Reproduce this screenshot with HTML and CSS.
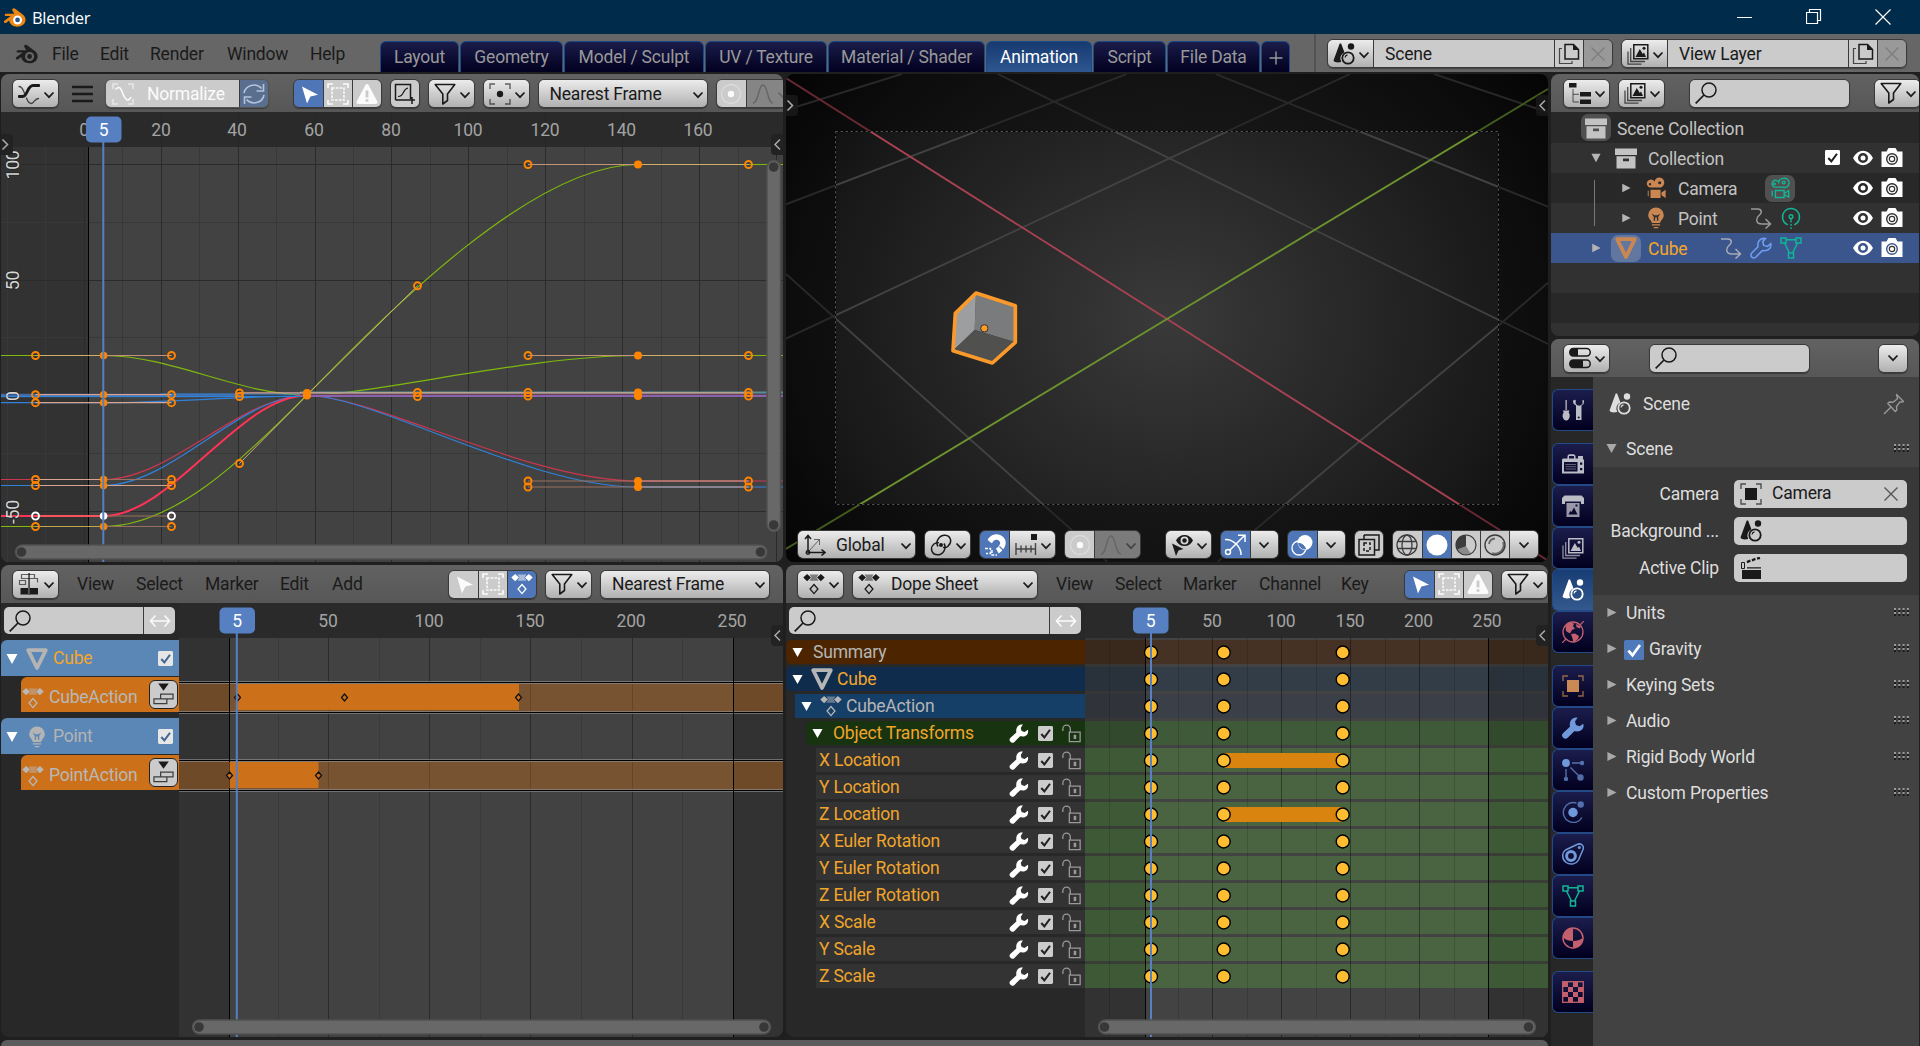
FILE: index.html
```html
<!DOCTYPE html>
<html lang="en">
<head>
<meta charset="utf-8">
<title>Blender</title>
<link rel="stylesheet" href="styles.css">
</head>
<body>
<svg class="defs" aria-hidden="true">
  <defs>
    <symbol id="logo" viewBox="0 0 24 20"><path fill="currentColor" d="M10.2.7c.8-.6 1.700-.4 2.500.2l7.600 5.800c2.400 1.800 3.500 3.900 3.300 6.300-.3 3.900-3.900 6.700-8.600 6.700-4.600 0-8.100-2.700-8.600-6.500L3.400 15.500c-.9.600-1.900.4-2.300-.2-.5-.7-.3-1.500.5-2.100L8 8.500H3.200C2.300 8.500 1.700 8 1.700 7.300S2.300 6 3.200 6h8.600L9.900 2.900C9.400 2.100 9.500 1.200 10.200.7z"/><circle class="logo-ring" cx="15.200" cy="12.600" r="4.700"/><circle class="logo-eye" cx="15.200" cy="12.600" r="2.500"/></symbol>
    <symbol id="chev" viewBox="0 0 12 8"><path d="M1.500 1.500 6 6.200l4.500-4.700" fill="none" stroke="currentColor" stroke-width="1.700"/></symbol>
    <symbol id="tri-d" viewBox="0 0 12 12"><path d="M.5 1h11L6 11z" fill="currentColor"/></symbol>
    <symbol id="tri-r" viewBox="0 0 12 12"><path d="M1.500 1 11.500 6l-10 5z" fill="currentColor"/></symbol>
    <symbol id="curve" viewBox="0 0 22 22"><g fill="none" stroke="currentColor" stroke-linecap="round"><path d="M1 13.500h3.500C10 13.500 9 2.500 15 2.500h6" stroke-width="2.800"/><path d="M1 3.500c4 0 4 5 6 7M8.500 15c1 3 2.500 5.500 5 5.500s3-5 7-5" stroke-width="1.300" opacity=".75"/></g></symbol>
    <symbol id="norm" viewBox="0 0 22 22"><g fill="none" stroke="currentColor" stroke-width="1.500"><path d="M1 6V1h5M16 1h5v5M21 16v5h-5M6 21H1v-5" opacity=".6"/><path d="M3.500 6.500C8 2 9 6 11 11s5 9 8 3"/></g></symbol>
    <symbol id="sync" viewBox="0 0 22 22"><g fill="none" stroke="currentColor" stroke-width="1.600"><path d="M1 10A10 9.500 0 0 1 18.500 5.500M20.500 1v7h-7M21 12A10 9.500 0 0 1 3.500 16.500M1.500 21v-7h7"/></g></symbol>
    <symbol id="cursor" viewBox="0 0 22 22"><path d="M4 3.500 20 11.800l-7.600 1.700L9 20.500z" fill="currentColor"/></symbol>
    <symbol id="boxsel" viewBox="0 0 22 22"><g fill="none" stroke="currentColor" stroke-width="1.600"><path d="M1 5V1h5M16 1h5v4M21 17v4h-5M6 21H1v-4"/><path d="M5 5h12v12H5z" stroke-dasharray="2.600 1.200"/></g></symbol>
    <symbol id="warn" viewBox="0 0 22 22"><path fill="currentColor" fill-rule="evenodd" d="M9.400 2c.6-1.200 2.600-1.200 3.200 0l8.700 16.500c.6 1.200-.1 2.500-1.500 2.500H2.200C.8 21 .1 19.700.7 18.500zM9.600 7.500v7h2.800v-7zm0 8.800v2.400h2.800v-2.400z"/></symbol>
    <symbol id="gbox" viewBox="0 0 22 22"><g fill="none" stroke="currentColor" stroke-width="1.500"><path d="M1.500 17V1.500h15V16M1.500 17H21M18 14v7"/><path d="M4 13.500C11 13 8 6 14 5" stroke-width="1.200"/></g></symbol>
    <symbol id="filter" viewBox="0 0 22 22"><path d="M1.200 1.500h19.600L13.500 11v6.500L8.800 21V11z" fill="none" stroke="currentColor" stroke-width="1.600" stroke-linejoin="round"/></symbol>
    <symbol id="pivot" viewBox="0 0 22 22"><path d="M1 6V1h5M16 1h5v5M21 16v5h-5M6 21H1v-5" fill="none" stroke="currentColor" stroke-width="1.400" opacity=".65"/><circle cx="11" cy="11" r="3.200" fill="currentColor"/></symbol>
    <symbol id="prop" viewBox="0 0 22 22"><circle cx="11" cy="11" r="9.500" fill="none" stroke="currentColor" opacity=".35" stroke-width="1.300"/><circle cx="11" cy="11" r="3.200" fill="currentColor"/></symbol>
    <symbol id="falloff" viewBox="0 0 22 22"><path d="M1 20c6 0 5-18 10-18s4 18 10 18" fill="none" stroke="currentColor" stroke-width="1.500"/></symbol>
    <symbol id="scene" viewBox="0 0 22 22"><path fill="currentColor" d="M6.700.6h1.400l3.300 8.600a7 7 0 0 0-3.200 9.800C5 19.900 1.600 19.600.5 17.500z"/><circle cx="18" cy="3.500" r="3.200" fill="currentColor"/><circle cx="15" cy="15" r="5.700" fill="none" stroke="currentColor" stroke-width="1.800"/><path d="M12 14.500a3.200 3.200 0 0 1 2.500-2.700" stroke="currentColor" fill="none" stroke-width="1.200"/></symbol>
    <symbol id="copy" viewBox="0 0 22 22"><path d="M7 1.500h8.500l5 5V16H7z" fill="none" stroke="currentColor" stroke-width="1.500"/><path d="M15 1v6h6z" fill="currentColor"/><path d="M4 5.500H1.500v15H14V18" fill="none" stroke="currentColor" stroke-width="1.200" opacity=".75"/></symbol>
    <symbol id="x" viewBox="0 0 22 22"><path d="m4.500 4.500 13 13m0-13-13 13" stroke="currentColor" stroke-width="1.400" fill="none"/></symbol>
    <symbol id="layers" viewBox="0 0 22 22"><path d="M6.800 1.700h14v14h-14z" fill="none" stroke="currentColor" stroke-width="1.500"/><path d="m8.500 14 4.300-8 3 5 1.200-1.500 2 4.500z" fill="currentColor"/><circle cx="17" cy="5.200" r="1.500" fill="currentColor"/><path d="M3.700 5v13.500H18M1 8.500v12.700h13.500" fill="none" stroke="currentColor" stroke-width="1.300" opacity=".75"/></symbol>
    <symbol id="tree" viewBox="0 0 22 22"><path fill="currentColor" d="M0 1h7.500v4.500H0zM11 10h11v4.500H11zM11 17.500h11V22H11z"/><path d="M4 7v13h6M4 12.300h6" fill="none" stroke="currentColor" opacity=".7"/></symbol>
    <symbol id="search" viewBox="0 0 22 22"><circle cx="14" cy="8" r="7" fill="none" stroke="currentColor" stroke-width="1.500"/><path d="m9 13-8.300 8.300" stroke="currentColor" stroke-width="1.700"/></symbol>
    <symbol id="coll" viewBox="0 0 22 22"><path fill="currentColor" fill-rule="evenodd" d="M0 1.500h22V8H0zM1.500 9.200h19V21.500h-19zM8 11.500v2.800h6v-2.800z"/></symbol>
    <symbol id="eye" viewBox="0 0 22 22"><path fill="currentColor" fill-rule="evenodd" d="M1 11Q5 3.700 11 3.700T21 11q-4 7.300-10 7.300T1 11zm10-5a5 5 0 1 0 0 10 5 5 0 0 0 0-10z"/><circle cx="11" cy="11" r="2.500" fill="currentColor"/></symbol>
    <symbol id="cam" viewBox="0 0 22 22"><path fill="currentColor" fill-rule="evenodd" d="M.5 4.500h5L7.500 1h7l2 3.500h5V20H.5zM11 6a6 6 0 1 0 0 12 6 6 0 0 0 0-12z"/><circle cx="11" cy="12" r="4.600" fill="currentColor"/><circle cx="11" cy="12" r="2.700" fill="none" stroke="#333" stroke-width="1.200"/></symbol>
    <symbol id="check" viewBox="0 0 16 16"><rect width="16" height="16" rx="1.500" fill="currentColor"/><path d="m3.500 8.500 3.300 3.700L12.800 4" class="tick"/></symbol>
    <symbol id="movie" viewBox="0 0 22 24"><path fill="currentColor" fill-rule="evenodd" d="M15 .5a5.500 5.500 0 1 1-1 11H4.500a4.500 4.500 0 1 1 5-6.500A5.500 5.500 0 0 1 15 .5zm0 4a1.700 1.700 0 1 0 0 3.400 1.700 1.700 0 0 0 0-3.400zM4.500 6.500a1.300 1.300 0 1 0 0 2.600 1.300 1.300 0 0 0 0-2.600zM5 14h11v9H5zM3 15v6H2v-6zM21.500 14v9L17 20v-3z"/></symbol>
    <symbol id="movie-o" viewBox="0 0 22 24"><g fill="none" stroke="currentColor" stroke-width="1.500"><path d="M15 1.500a5 5 0 1 1-1 9.500H5a3.800 3.800 0 1 1 4.600-5.200A5.200 5.200 0 0 1 15 1.500zM6 14.700h9.500v7.600H6zM20.500 15v7L16 19.500v-2zM2.500 15v6"/><circle cx="15" cy="6" r="1.500"/><circle cx="5" cy="7.500" r=".8"/></g></symbol>
    <symbol id="bulb" viewBox="0 0 22 24"><path fill="currentColor" fill-rule="evenodd" d="M11 .5a8.500 8.500 0 0 1 8.500 8.500c0 4-3.500 5-4 8.500h-9c-.5-3.500-4-4.500-4-8.500A8.500 8.500 0 0 1 11 .5zM7 7v1.500l1.500 2.200V15H10v-3.500h2V15h1.500v-4.300L15 8.500V7l-2 2H9z"/><path d="M6.500 19.500h9M8.500 22.500h5" stroke="currentColor" stroke-width="1.600"/></symbol>
    <symbol id="anim" viewBox="0 0 22 22"><path d="M1 2h6.500c5 0 4.500 4 1.500 6.500s-4 8.500 3 8.500h8.500M15.500 12l5 5-5 4.500" fill="none" stroke="currentColor" stroke-width="1.500"/></symbol>
    <symbol id="light" viewBox="0 0 22 24"><path d="M7.500 19.500A9.300 9.300 0 1 1 14.500 19.500M11 12v5M11 18.500v2M11 22v2" fill="none" stroke="currentColor" stroke-width="1.500"/><circle cx="11" cy="10.500" r="2" fill="none" stroke="currentColor" stroke-width="1.500"/></symbol>
    <symbol id="obmesh" viewBox="0 0 22 22"><path d="M2.200 2.200h17.600L11 20z" fill="none" stroke="currentColor" stroke-width="3.800" stroke-linejoin="round"/></symbol>
    <symbol id="wrench" viewBox="0 0 22 22"><path fill="currentColor" d="M15.500.7 13 4.500l1 3.600 3.500 1.200 3.800-2.600c1 3.500-.8 7.700-5.800 7.700-1.500 0-2.500-.3-3.200-.2l-6.600 6.500A3.100 3.100 0 0 1 1.200 16l6.700-6.300C7 3.500 11-.3 15.500.7z"/></symbol>
    <symbol id="wrench-o" viewBox="0 0 22 22"><path fill="none" stroke="currentColor" stroke-width="1.600" d="M15.500 1.500 12.700 4.700l1 3.700 3.800 1 3.200-2.600c.8 3.500-1.200 6.900-6 6.900-1 0-1.800-.3-2.500 0L6 20a2.900 2.900 0 0 1-4.300-4L8 9.800C7 4.500 10.500.6 15.500 1.500z"/></symbol>
    <symbol id="mesh" viewBox="0 0 22 22"><g fill="none" stroke="currentColor" stroke-width="1.500"><path d="M1 1h5v5H1zM16 1h5v5h-5zM8.500 16h5v5h-5zM6 2.700h10M4.500 6l5 10M17.500 6l-5 10"/></g></symbol>
    <symbol id="props" viewBox="0 0 22 22"><g fill="none" stroke="currentColor" stroke-width="1.500"><rect x=".8" y="1.500" width="20.400" height="7.600" rx="3.500"/><rect x=".8" y="13" width="20.400" height="7.600" rx="3.500"/></g><path d="M4 1.500h5v7.600H4a3 3 0 0 1-3-3v-1.600a3 3 0 0 1 3-3zM4 13h10v7.600H4a3 3 0 0 1-3-3V16a3 3 0 0 1 3-3z" fill="currentColor"/></symbol>
    <symbol id="tool" viewBox="0 0 22 22"><path fill="currentColor" d="M3.500 1h1.300v10H3.500zM.8 11.500h6.700l-.8 2c2.300 3 .5 8-2.500 8s-5-5-2.500-8zM11 1.500c0 3 .7 3.700 3 5V21h5.500V6.500c2.300-1.300 2.500-2 2.500-5l-1.500-.7v4l-2 1.700h-2.800l-2-1.700v-4z"/><circle cx="16.700" cy="18.500" r="1" fill="#0a0b33"/></symbol>
    <symbol id="render" viewBox="0 0 22 22"><path fill="currentColor" fill-rule="evenodd" d="M1 5.500h4.500V2.700l1.500-1.500h5l1.500 1.500v2.800H16V3h5v3l1 1v13.500H0V6.500zM7 3v2.500h5V3zM2 9v9.500h13.500V9zM18 9.500v2.300h2.300V9.500zM18 15v2.300h2.300V15z"/><path d="M3.500 11.500H14M3.500 13.700H14M3.500 16H14" stroke="currentColor" stroke-width=".8" opacity=".6"/></symbol>
    <symbol id="output" viewBox="0 0 22 22"><path fill="currentColor" d="M2.500.5h17L22 3v6h-3V6.500H3V9H0V3z"/><path fill="currentColor" fill-rule="evenodd" opacity=".8" d="M4.500 8h13v14h-13zM6.500 19.500h9L12 12.500 9.500 17 8.200 16zM13.500 9.500v2h2v-2z"/></symbol>
    <symbol id="world" viewBox="0 0 22 22"><circle cx="11" cy="11" r="10" fill="none" stroke="currentColor" stroke-width="1.300"/><path fill="currentColor" d="M3.500 4.500 8 1.500l4 1-1 3 2 2-3 1.500-2 3.500-4-2.500zM14 3l5 2.500-1.500 2L14.500 6zM9 13l4-.5 4 2.500-1 3-4.500 3.500-1-4z"/><path d="m18 4 4-4M0 22l4-4" stroke="currentColor" stroke-width="1.200"/></symbol>
    <symbol id="object" viewBox="0 0 22 22"><path d="M1 6V1h5M16 1h5v5M21 16v5h-5M6 21H1v-5" fill="none" stroke="currentColor" stroke-width="1.400" opacity=".7"/><rect x="5" y="5" width="12" height="12" fill="currentColor"/></symbol>
    <symbol id="parts" viewBox="0 0 22 22"><circle cx="4" cy="4" r="3.900" fill="currentColor"/><g opacity=".7" fill="currentColor" stroke="currentColor" stroke-width="1.400"><path d="M10 4h9M4 10v9M8.500 8.500 18 18"/><circle cx="20" cy="4" r="1.500"/><circle cx="4" cy="20" r="1.500"/><circle cx="18.500" cy="18.500" r="2.500"/></g></symbol>
    <symbol id="physics" viewBox="0 0 22 22"><circle cx="11" cy="11.500" r="4.700" fill="currentColor"/><g opacity=".7"><path d="M14.500 2A10 10 0 1 0 20 16.500" fill="none" stroke="currentColor" stroke-width="1.400"/><circle cx="18.700" cy="3.500" r="3.200" fill="currentColor"/></g></symbol>
    <symbol id="constr" viewBox="0 0 22 22"><path d="M3.500 7 15 1.500c4-2 7.500 1.500 6 5L16.500 17c-2 4-8 5.500-12.300 2.500S-.500 10 3.500 7z" fill="none" stroke="currentColor" stroke-width="1.500"/><circle cx="9" cy="13" r="4.400" fill="none" stroke="currentColor" stroke-width="3"/><circle cx="17.300" cy="4.500" r="1.500" fill="currentColor"/></symbol>
    <symbol id="material" viewBox="0 0 22 22"><circle cx="11" cy="11" r="10" fill="none" stroke="currentColor" stroke-width="1.500"/><path fill="currentColor" d="M11 1v13C7 14 4 13 1.500 11A10 10 0 0 1 11 1zM11 14c4 0 7-1 9.800-3A10 10 0 0 1 11 21z"/></symbol>
    <symbol id="texture" viewBox="0 0 22 22"><rect x=".7" y=".7" width="20.600" height="20.600" fill="none" stroke="currentColor" stroke-width="1.300"/><path fill="currentColor" d="M1 1h5v5H1zM11 1h5v5h-5zM6 6h5v5H6zM16 6h5v5h-5zM1 11h5v5H1zM11 11h5v5h-5zM6 16h5v5H6zM16 16h5v5h-5z"/></symbol>
    <symbol id="pin" viewBox="0 0 22 22"><path d="m13.500 1.500 7 7-2 .7-1.500-.3-3.500 4.600.3 3.500-1.500 1.500L4.800 10.500l1.500-1.500 3.700.2 4.500-3.500-.3-1.700zM8 14l-7 7" fill="none" stroke="currentColor" stroke-width="1.400" stroke-linejoin="round"/></symbol>
    <symbol id="clip" viewBox="0 0 22 22"><path fill="currentColor" d="M2 13h19v9H2zM7 10.300h14v1.200H7zM6.500 4l3.500-1.500.8 2.300-3.500 1.500zM11.500 2.200 15 .8l.8 2.300-3.500 1.400zM16.700.5l3-.8.6 2.300-2.900.8z"/><path d="M1.500 5.500h3v6h-3z" fill="none" stroke="currentColor"/></symbol>
    <symbol id="nla" viewBox="0 0 22 22"><path fill="currentColor" d="M2.500 15H10v6.500H2.500zM12 15h8v6.500h-8zM10.400 0h1.300v22h-1.300z"/><path d="M3.500 1.500h13v4h-13zM1.500 7.500h6v4h-6zM9.500 5.500h10v4" fill="none" stroke="currentColor" stroke-width="1.200" opacity=".65"/></symbol>
    <symbol id="action" viewBox="0 0 24 22"><path fill="currentColor" d="m4.500 0 4.200 4-4.200 4-4.200-4zM19.500 0l4.200 4-4.200 4-4.200-4z"/><path fill="currentColor" opacity=".5" d="M7 .6h10L14.700 4 17 7.400H7L9.300 4z"/><path d="m12 11.500 4.300 5-4.300 5-4.300-5z" fill="none" stroke="currentColor" stroke-width="1.400"/></symbol>
    <symbol id="swap" viewBox="0 0 22 22"><path d="M1.500 11h19M6.500 5.500l-5 5.500 5 5.500M15.500 5.500l5 5.500-5 5.500" fill="none" stroke="currentColor" stroke-width="1.600"/></symbol>
    <symbol id="push" viewBox="0 0 22 24"><path d="M5.500.5h11L11 8z" fill="currentColor"/><path d="M8 11.500h13v5H8zM1 16.500h13.500v5H1z" fill="none" stroke="currentColor" stroke-width="1.300" opacity=".8"/></symbol>
    <symbol id="axes" viewBox="0 0 22 22"><path d="M4 1.500V18.500H21M1 5l3-3.500L7 5M17.500 15.500l3.500 3-3.500 3" fill="none" stroke="currentColor" stroke-width="1.500"/><circle cx="4" cy="18.500" r="1.800" fill="none" stroke="currentColor" stroke-width="1.300"/><path d="M5 17 15.500 5.500M10 5.500h5.500V11" fill="none" stroke="currentColor" opacity=".6"/></symbol>
    <symbol id="link" viewBox="0 0 22 22"><g fill="none" stroke="currentColor" stroke-width="1.500"><path d="M8 12.500C5 8 9 1 15 1.200c6 .3 7.500 7.300 3 11-1.500 1.300-3.500 1.600-5 1.200"/><path d="M14 9.500c3 5-1 11.300-6.500 11.300-6 0-8-7-3.500-10.800 1.500-1.300 3-1.600 4.800-1.200"/></g><circle cx="11" cy="11" r="2" fill="currentColor"/></symbol>
    <symbol id="magnet" viewBox="0 0 22 22"><path d="M5.500 8C8 2.500 14 1.500 17.300 5s1.200 9-4 12" fill="none" stroke="currentColor" stroke-width="5.500"/><path d="M15.500 12.500l4 4M3 6l4.500 4.500" stroke="#4f76b6" stroke-width="1.200"/><path d="M1 14.500h5.500v5H2M8 16v5h5" fill="none" stroke="currentColor" stroke-dasharray="3 1.300" stroke-width="1.400"/></symbol>
    <symbol id="snap" viewBox="0 0 22 22"><path fill="currentColor" d="M16 0h6v6h-6z"/><path d="M1 9v12M6 11.500v7M11 11.500v7M16 11.500v7M20.500 9v12M1 15h20" fill="none" stroke="currentColor" stroke-width="1.400" opacity=".75"/></symbol>
    <symbol id="vis" viewBox="0 0 22 22"><path fill="currentColor" fill-rule="evenodd" d="M5 6.500Q8 1 13.500 1T22 6.500Q19 12 13.500 12T5 6.500zm8.500-4a4 4 0 1 0 0 8 4 4 0 0 0 0-8z"/><circle cx="13.500" cy="6.500" r="2.200" fill="currentColor"/><path fill="currentColor" d="M1 9.500 12.500 15 7.500 16.500 5 22z"/></symbol>
    <symbol id="gizmo" viewBox="0 0 22 22"><g fill="none" stroke="currentColor" stroke-width="1.500"><path d="m5.500 16.500 15-15M14 1.200h7V8M1 5.500C9 5 17.500 13 17 21"/><circle cx="4" cy="18" r="2.500"/></g></symbol>
    <symbol id="overlay" viewBox="0 0 22 22"><circle cx="14" cy="8.500" r="7.500" fill="currentColor"/><circle cx="8" cy="14" r="7" fill="none" stroke="currentColor" stroke-width="1.300"/><path d="M7.500 9.500a6.800 6.800 0 0 1 7 5.500 6.800 6.800 0 0 1-7-5.500z" fill="#4e74b4" stroke="#4e74b4"/></symbol>
    <symbol id="xray" viewBox="0 0 22 22"><g fill="none" stroke="currentColor" stroke-width="1.500"><path d="M6 1h15v15H17M6 1v4M1 5.500h15.500V21H1z"/><path d="M6 9v8h6V9z" stroke-dasharray="3 2"/></g></symbol>
    <symbol id="wire" viewBox="0 0 22 22"><g fill="none" stroke="currentColor" stroke-width="1.300"><circle cx="11" cy="11" r="10"/><ellipse cx="11" cy="11" rx="5" ry="10"/><path d="M2 7.500h18M2 14.500h18"/></g></symbol>
    <symbol id="solid" viewBox="0 0 22 22"><circle cx="11" cy="11" r="10.500" fill="currentColor"/></symbol>
    <symbol id="matprev" viewBox="0 0 22 22"><circle cx="11" cy="11" r="10" fill="none" stroke="currentColor" stroke-width="1.200"/><path fill="currentColor" d="M11 1v11l5 8C8 23 1 18 1 11A10 10 0 0 1 11 1z" opacity=".45"/><path fill="currentColor" d="M11 1v11L2 15.500A10 10 0 0 1 11 1z"/></symbol>
    <symbol id="rend" viewBox="0 0 22 22"><circle cx="11" cy="11" r="10" fill="none" stroke="currentColor" stroke-width="1.400"/><path d="M5 10a6.500 6.500 0 0 1 6-5.500M19 8a8.500 8.500 0 0 1-11 11" fill="none" stroke="currentColor" stroke-width="1.800" opacity=".7"/></symbol>
    <symbol id="lock" viewBox="0 0 22 22"><path d="M1 8V5.500a4.300 4.300 0 0 1 8.600 0V9.500M8.500 9.500h12.500v11H8.500z" fill="none" stroke="currentColor" stroke-width="1.500"/><path fill="currentColor" d="M13.500 12.500h3v5h-3z"/></symbol>
    <symbol id="grip" viewBox="0 0 15 8"><path d="M0 1h15" stroke="#b8b8b8" stroke-width="1.500" stroke-dasharray="2 2.300"/><path d="M0 5h15" stroke="#b8b8b8" stroke-width="1.500" stroke-dasharray="2 2.300"/><path d="M0 3h15M0 7h15" stroke="#111" stroke-width="1.300" stroke-dasharray="2 2.300"/></symbol>
  </defs>
</svg>

<header class="titlebar">
  <svg class="app-logo"><use href="#logo"/></svg><span class="app-name">Blender</span>
  <div class="window-buttons">
    <svg width="16" height="16"><path d="M0 8.500h15" stroke="#fff"/></svg>
    <svg width="16" height="16"><path d="M.5 3.500h11v11H.5zM3.500 3.500v-3h11v11h-3" fill="none" stroke="#fff" stroke-width="1.200"/></svg>
    <svg width="16" height="16"><path d="m.5.500 15 15m0-15-15 15" stroke="#fff" stroke-width="1.200"/></svg>
  </div>
</header>

<nav class="topbar">
  <svg class="menu-logo"><use href="#logo"/></svg>
  <span class="m-file">File</span><span class="m-edit">Edit</span><span class="m-render">Render</span><span class="m-window">Window</span><span class="m-help">Help</span>
  <div class="tabs">
    <span class="tab t1">Layout</span><span class="tab t2">Geometry</span><span class="tab t3">Model / Sculpt</span><span class="tab t4">UV / Texture</span><span class="tab t5">Material / Shader</span><span class="tab t6 active">Animation</span><span class="tab t7">Script</span><span class="tab t8">File Data</span><span class="tab t9"><svg width="14" height="14"><path d="M7 .5v13M.5 7h13" stroke="#999" stroke-width="1.400"/></svg></span>
  </div>
  <div class="ids">
    <div class="group"><span class="b dd"><svg class="i"><use href="#scene"/></svg><svg class="chev"><use href="#chev"/></svg></span><span class="b flat id-name">Scene</span><span class="b flat sq"><svg class="i"><use href="#copy"/></svg></span><span class="b off sq"><svg class="i"><use href="#x"/></svg></span></div>
    <div class="group"><span class="b dd"><svg class="i"><use href="#layers"/></svg><svg class="chev"><use href="#chev"/></svg></span><span class="b flat id-name">View Layer</span><span class="b flat sq"><svg class="i"><use href="#copy"/></svg></span><span class="b off sq"><svg class="i"><use href="#x"/></svg></span></div>
  </div>
</nav>

<main class="workspace">
  <section class="area graph">
    <div class="head">
      <div class="group"><span class="b dd"><svg class="i"><use href="#curve"/></svg><svg class="chev"><use href="#chev"/></svg></span></div>
      <svg class="burger" width="21" height="18"><path d="M1 2h19M1 9h19M1 16h19" stroke="#1a1a1a" stroke-width="2.600" stroke-linecap="round"/></svg>
      <div class="group mute"><span class="b flat normalize"><svg class="i"><use href="#norm"/></svg>Normalize</span><span class="b slate sq"><svg class="i"><use href="#sync"/></svg></span></div>
      <div class="group g24"><span class="b on sq"><svg class="i"><use href="#cursor"/></svg></span><span class="b flat sq white"><svg class="i"><use href="#boxsel"/></svg></span><span class="b flat sq white"><svg class="i"><use href="#warn"/></svg></span></div>
      <div class="group g8"><span class="b flat sq solo"><svg class="i"><use href="#gbox"/></svg></span></div>
      <div class="group g8"><span class="b dd"><svg class="i"><use href="#filter"/></svg><svg class="chev"><use href="#chev"/></svg></span></div>
      <div class="group g8"><span class="b dd"><svg class="i"><use href="#pivot"/></svg><svg class="chev"><use href="#chev"/></svg></span></div>
      <div class="group g8"><span class="b select w170">Nearest Frame<svg class="chev"><use href="#chev"/></svg></span></div>
      <div class="group g8"><span class="b flat sq white"><svg class="i"><use href="#prop"/></svg></span><span class="b off dd dim"><svg class="i"><use href="#falloff"/></svg><svg class="chev"><use href="#chev"/></svg></span></div>
    </div>
    <svg class="canvas" width="782" height="450" viewBox="1 112 782 450">
      <rect x="1" y="112" width="782" height="450" fill="#424242"/>
      <rect x="1" y="112" width="87" height="450" fill="#323232"/>
      <path d="M7.500 147v415M45.500 147v415M122.500 147v415M199.500 147v415M276.500 147v415M353.500 147v415M430.500 147v415M507.500 147v415M584.500 147v415M661.500 147v415M738.500 147v415M1 222.500h782M1 337.500h782M1 453.500h782" stroke="#383838"/>
      <path d="M84.500 147v415M161.500 147v415M238.500 147v415M315.500 147v415M391.500 147v415M468.500 147v415M545.500 147v415M622.500 147v415M699.500 147v415M776.500 147v415M1 164.500h782M1 280.500h782M1 395.500h782M1 511.500h782" stroke="#2b2b2b"/>
      <path d="M88.500 147v415" stroke="#000"/>
      <rect x="1" y="112" width="782" height="35" fill="#2a2a2a"/>
      <path d="M161.500 112v35M238.500 112v35M315.500 112v35M391.500 112v35M468.500 112v35M545.500 112v35M622.500 112v35M699.500 112v35" stroke="#262626"/>
      <g class="tick-label"><text x="84" y="136">0</text><text x="161" y="136">20</text><text x="237" y="136">40</text><text x="314" y="136">60</text><text x="391" y="136">80</text><text x="468" y="136">100</text><text x="545" y="136">120</text><text x="621.500" y="136">140</text><text x="698" y="136">160</text></g>
      <g fill="none" stroke-width="1.200">
        <g stroke="#7eb90c"><path d="M1 355.500H103.600C171.500 355.500 239.500 395 307 395S528 355.500 638 355.500H783"/><path d="M1 526.500H103.600C171.500 526.500 239.500 463.500 307 395S528 164.500 638 164.500H783"/></g>
        <path stroke="#cb3650" d="M1 479.500H103.600C171.500 479.500 239.500 395.500 307 395.500S528 481 638 481H783"/>
        <path stroke="#2f82dc" d="M1 485.500H103.600C171.500 485.500 239.500 395.500 307 395.500S528 487 638 487H783M1 402.700H103.600C171.500 402.700 239.500 396 307 396"/>
        <path stroke="#ff3355" stroke-width="2" d="M1 516H103.600C171.500 516 239.500 395.500 307 395.500"/>
        <path stroke="#4668a0" stroke-width="3.500" d="M1 395.500H240"/><path stroke="#2f82dc" stroke-width="1.200" d="M1 396.300H300M160 394h150"/>
        <path stroke="#54909a" stroke-width="1.800" d="M300 392.500H783"/><path stroke="#6a4050" stroke-width="1.200" d="M300 394.500H783"/><path stroke="#8a63b0" stroke-width="2" d="M300 396H783"/>
      </g>
      <g fill="none" stroke="#c29379" stroke-width="1.200">
        <path stroke="#cfae66" d="M35.500 355.500h68M638 355.500h110.500M638 164.500h110.500"/><path d="M103.600 355.500h68M528 355.500h110M528 164.500h110"/>
        <path stroke="#c9a77c" stroke-width="1" d="M239.500 463.500 307 395 417.500 285.800"/>
        <path stroke="#d7a492" d="M35.500 479.500h68M35.500 485.500h136M35.500 402.700h136M35.500 394.700h136M638 481h110.500M638 487h110.500M239.500 392.900h509"/>
        <path stroke="#97705f" d="M103.600 479.500h68M103.600 516h68M103.600 526.500h68M528 481h110M528 487h110"/><path stroke="#c4a54d" d="M35.500 526.500h68"/><path stroke="#f07560" d="M35.500 516h68"/>
      </g>
      <g fill="none" stroke="#ff8500" stroke-width="1.900">
        <g id="hL"><circle cx="35.500" cy="355.500" r="3.500"/><circle cx="35.500" cy="394.700" r="3.500"/><circle cx="35.500" cy="402.700" r="3.500"/><circle cx="35.500" cy="479.500" r="3.500"/><circle cx="35.500" cy="485.500" r="3.500"/><circle cx="35.500" cy="526.500" r="3.500"/></g>
        <use href="#hL" x="136"/>
        <circle cx="239.500" cy="463.500" r="3.500"/><circle cx="417.500" cy="285.800" r="3.500"/>
        <g id="hR"><circle cx="528" cy="164.500" r="3.500"/><circle cx="528" cy="355.500" r="3.500"/><circle cx="528" cy="392.500" r="3.500"/><circle cx="528" cy="396" r="3.500"/><circle cx="528" cy="481" r="3.500"/><circle cx="528" cy="487" r="3.500"/></g>
        <use href="#hR" x="220.500"/>
        <circle cx="239.500" cy="393" r="3.500"/><circle cx="239.500" cy="396.500" r="3.500"/><circle cx="417.500" cy="392.500" r="3.500"/><circle cx="417.500" cy="396.500" r="3.500"/>
        <g stroke="#fff"><circle cx="35.500" cy="516" r="3.500"/><circle cx="171.500" cy="516" r="3.500"/></g>
      </g>
      <g fill="#ff8500"><circle cx="103.600" cy="355.500" r="3.800"/><circle cx="103.600" cy="394.700" r="3.800"/><circle cx="103.600" cy="402.700" r="3.800"/><circle cx="103.600" cy="479.500" r="3.800"/><circle cx="103.600" cy="485.500" r="3.800"/><circle cx="103.600" cy="526.500" r="3.800"/><circle cx="103.600" cy="516" r="3.800" fill="#fff"/><circle cx="307" cy="393" r="4"/><circle cx="307" cy="395.500" r="4"/><circle cx="638" cy="164.500" r="4"/><circle cx="638" cy="355.500" r="4"/><circle cx="638" cy="392.500" r="4"/><circle cx="638" cy="396" r="4"/><circle cx="638" cy="481" r="4"/><circle cx="638" cy="487" r="4"/></g>
      <g class="y-label"><text transform="translate(19 165) rotate(-90)">100</text><text transform="translate(19 280.500) rotate(-90)">50</text><text transform="translate(19 396) rotate(-90)">0</text><text transform="translate(19 512) rotate(-90)">-50</text></g>
      <path d="M103.300 142v420" stroke="#5680c2" stroke-width="2"/><rect x="86" y="116.500" width="35.500" height="26" rx="5" fill="#5680c2"/><text class="now" x="103.500" y="136">5</text>
      <g class="bar"><rect x="767" y="160.500" width="13.500" height="371" rx="6.700"/><rect x="15.500" y="545" width="751.500" height="14" rx="7"/></g>
      <g class="knob"><circle cx="773.700" cy="167" r="4.800"/><circle cx="773.700" cy="525" r="4.800"/><circle cx="21.500" cy="552" r="4.800"/><circle cx="760.500" cy="552" r="4.800"/></g>
      <g class="flap"><path d="M1 134h8a4 4 0 0 1 4 4v13a4 4 0 0 1-4 4H1z"/><path d="M783 134h-8a4 4 0 0 0-4 4v13a4 4 0 0 0 4 4h8z"/></g>
      <path class="flap-arrow" d="m2.500 139.500 5 5-5 5M780 139.500l-5 5 5 5"/>
    </svg>
  </section>

  <section class="area viewport">
    <svg class="canvas" width="762" height="488" viewBox="786 74 762 488">
      <defs><radialGradient id="vg" gradientUnits="userSpaceOnUse" cx="1167" cy="319" r="500" gradientTransform="translate(1167 319) scale(1 .85) translate(-1167 -319)"><stop offset="0" stop-color="#3a3a3a"/><stop offset=".35" stop-color="#292929"/><stop offset=".7" stop-color="#181818"/><stop offset="1" stop-color="#050505"/></radialGradient></defs>
      <rect x="786" y="74" width="762" height="488" fill="url(#vg)"/>
      <g transform="translate(780 70) scale(.4974 .33333)" fill="none" class="floor">
        <path stroke="#424242" d="M12 120 245 12M12 403 697 12M12 806 783 265 1146 12M880 1475 1164 1115 1450 760 1544 638M438 12 783 265 1075 480 1544 822M876 12 1544 410M1315 12 1544 127M12 612 380 1105 658 1475"/>
        <path stroke="#a64252" d="M12 24 778 747 1544 1472"/><path stroke="#6c942e" d="M12 1437 778 747 1544 57"/>
      </g>
      <path fill="#000" fill-opacity=".38" fill-rule="evenodd" d="M786 74h762v488H786zM836 131.500v373h662.500v-373z"/>
      <rect x="835.500" y="131.500" width="663" height="373" fill="none" stroke="#000"/><rect x="835.500" y="131.500" width="663" height="373" fill="none" stroke="#4e4e4e" stroke-dasharray="2.500 2.500"/>
      <g transform="translate(900 250) scale(.33333)"><path fill="#7a7b7d" d="M228 128 346 167V277L224 240z"/><path fill="#9d9ea0" d="M228 128 166 190 159 302 224 240z"/><path fill="#50504e" d="M224 240 346 277 277 339 159 302z"/><path d="M228 129 346 167V277L277 339 159 302 166 190z" fill="none" stroke="#fb9a2b" stroke-width="11" stroke-linejoin="round"/><circle cx="253" cy="235" r="11" fill="#ff9d23" stroke="#333" stroke-width="3"/></g>
      <g class="flap dark"><path d="M786 95h8a4 4 0 0 1 4 4v13a4 4 0 0 1-4 4h-8z"/><path d="M1548 95h-8a4 4 0 0 0-4 4v13a4 4 0 0 0 4 4h8z"/></g>
      <path class="flap-arrow" d="m787.500 100.500 5 5-5 5M1545 100.500l-5 5 5 5"/>
    </svg>
    <div class="view-head">
      <div class="group"><span class="b select global"><svg class="i"><use href="#axes"/></svg>Global<svg class="chev"><use href="#chev"/></svg></span></div>
      <div class="group g8"><span class="b dd"><svg class="i"><use href="#link"/></svg><svg class="chev"><use href="#chev"/></svg></span></div>
      <div class="group g8"><span class="b on sq"><svg class="i"><use href="#magnet"/></svg></span><span class="b dd wide"><svg class="i"><use href="#snap"/></svg><svg class="chev"><use href="#chev"/></svg></span></div>
      <div class="group g8"><span class="b flat sq white"><svg class="i"><use href="#prop"/></svg></span><span class="b off2 dd wide"><svg class="i"><use href="#falloff"/></svg><svg class="chev"><use href="#chev"/></svg></span></div>
      <div class="group g24"><span class="b dd"><svg class="i"><use href="#vis"/></svg><svg class="chev"><use href="#chev"/></svg></span></div>
      <div class="group g8 pair"><span class="b on sq"><svg class="i"><use href="#gizmo"/></svg></span><span class="b sq"><svg class="chev"><use href="#chev"/></svg></span></div>
      <div class="group g8 pair"><span class="b on sq"><svg class="i"><use href="#overlay"/></svg></span><span class="b sq"><svg class="chev"><use href="#chev"/></svg></span></div>
      <div class="group g8"><span class="b flat sq solo"><svg class="i"><use href="#xray"/></svg></span></div>
      <div class="group g8"><span class="b flat sq soft"><svg class="i"><use href="#wire"/></svg></span><span class="b on sq"><svg class="i"><use href="#solid"/></svg></span><span class="b flat sq soft"><svg class="i"><use href="#matprev"/></svg></span><span class="b flat sq soft"><svg class="i"><use href="#rend"/></svg></span><span class="b sq"><svg class="chev"><use href="#chev"/></svg></span></div>
    </div>
  </section>

  <section class="area nla">
    <div class="head">
      <div class="group"><span class="b dd"><svg class="i"><use href="#nla"/></svg><svg class="chev"><use href="#chev"/></svg></span></div>
      <div class="menus"><span class="w59">View</span><span class="w69">Select</span><span class="w75">Marker</span><span class="w52">Edit</span><span>Add</span></div>
      <div class="group"><span class="b flat sq white"><svg class="i"><use href="#cursor"/></svg></span><span class="b flat sq white"><svg class="i"><use href="#boxsel"/></svg></span><span class="b on sq"><svg class="i"><use href="#action"/></svg></span></div>
      <div class="group g8"><span class="b dd"><svg class="i"><use href="#filter"/></svg><svg class="chev"><use href="#chev"/></svg></span></div>
      <div class="group g8"><span class="b select w170">Nearest Frame<svg class="chev"><use href="#chev"/></svg></span></div>
    </div>
    <div class="split">
      <div class="channels nla-ch">
        <div class="search-row"><span class="b flat find"><svg class="i"><use href="#search"/></svg></span><span class="b flat swap white"><svg class="i"><use href="#swap"/></svg></span></div>
        <div class="n-obj"><svg class="t"><use href="#tri-d"/></svg><svg class="i"><use href="#obmesh"/></svg><span class="sel">Cube</span><svg class="ck"><use href="#check"/></svg></div>
        <div class="n-act"><svg class="i"><use href="#action"/></svg><span>CubeAction</span><div class="pushdown"><svg><use href="#push"/></svg></div></div>
        <div class="n-obj"><svg class="t"><use href="#tri-d"/></svg><svg class="i"><use href="#bulb"/></svg><span>Point</span><svg class="ck"><use href="#check"/></svg></div>
        <div class="n-act"><svg class="i"><use href="#action"/></svg><span>PointAction</span><div class="pushdown"><svg><use href="#push"/></svg></div></div>
      </div>
      <svg class="canvas" width="604" height="434" viewBox="179 603 604 434">
        <rect x="179" y="603" width="604" height="434" fill="#323232"/><rect x="230" y="603" width="503.500" height="434" fill="#424242"/>
        <path d="M278.500 638v399M379.500 638v399M480.500 638v399M581.500 638v399M682.500 638v399" stroke="#3a3a3a"/>
        <path d="M328.500 638v399M429.500 638v399M530.500 638v399M632.500 638v399" stroke="#2b2b2b"/>
        <rect x="179" y="603" width="604" height="35" fill="#2a2a2a"/>
        <g id="track"><rect x="179" y="682" width="604" height="31" fill="#6f4a29"/><rect x="230" y="682" width="503.500" height="31" fill="#785331"/><path d="M179 682.500h604M179 712.500h604" stroke="#000"/><path d="M179 681.500h604M179 683.500h604M179 711.500h604M179 713.500h604" stroke="#8d8d8d" stroke-opacity=".65"/><path d="M328.500 684v27M429.500 684v27M530.500 684v27M632.500 684v27" stroke="#64442a"/></g>
        <use href="#track" y="78"/>
        <path d="M229.500 638v399M733.500 638v399" stroke="#000"/>
        <rect x="237" y="684" width="282" height="26" fill="#cc711a"/><rect x="229.500" y="762" width="89" height="26" fill="#cc711a"/>
        <path d="M237.500 694l3 3.500-3 3.500-3-3.500zM344.500 694l3 3.500-3 3.500-3-3.500zM518.500 694l3 3.500-3 3.500-3-3.500zM229.500 772l3 3.500-3 3.500-3-3.500zM318.500 772l3 3.500-3 3.500-3-3.500z" fill="#cc711a" stroke="#111" stroke-width="1.300"/>
        <g class="tick-label"><text x="328" y="627">50</text><text x="429" y="627">100</text><text x="530" y="627">150</text><text x="631" y="627">200</text><text x="732" y="627">250</text></g>
        <path d="M236.800 632v405" stroke="#5680c2" stroke-width="2"/><rect x="219.500" y="607.500" width="35.500" height="26" rx="5" fill="#5680c2"/><text class="now" x="237" y="627">5</text>
        <g class="bar"><rect x="192.500" y="1020" width="578" height="14" rx="7"/></g><g class="knob"><circle cx="199" cy="1027" r="4.800"/><circle cx="764" cy="1027" r="4.800"/></g>
        <g class="flap"><path d="M783 625h-8a4 4 0 0 0-4 4v13a4 4 0 0 0 4 4h8z"/></g><path class="flap-arrow" d="m780 630.500-5 5 5 5"/>
      </svg>
    </div>
  </section>

  <section class="area dope">
    <div class="head">
      <div class="group"><span class="b dd"><svg class="i"><use href="#action"/></svg><svg class="chev"><use href="#chev"/></svg></span></div>
      <div class="group g8"><span class="b select mode"><svg class="i"><use href="#action"/></svg>Dope Sheet<svg class="chev"><use href="#chev"/></svg></span></div>
      <div class="menus"><span class="w59">View</span><span class="w68">Select</span><span class="w76">Marker</span><span class="w82">Channel</span><span>Key</span></div>
      <div class="group"><span class="b on sq"><svg class="i"><use href="#cursor"/></svg></span><span class="b flat sq white"><svg class="i"><use href="#boxsel"/></svg></span><span class="b flat sq white"><svg class="i"><use href="#warn"/></svg></span></div>
      <div class="group g8"><span class="b dd"><svg class="i"><use href="#filter"/></svg><svg class="chev"><use href="#chev"/></svg></span></div>
    </div>
    <div class="split">
      <div class="channels dope-ch">
        <div class="search-row"><span class="b flat find"><svg class="i"><use href="#search"/></svg></span><span class="b flat swap white"><svg class="i"><use href="#swap"/></svg></span></div>
        <div class="ch summary"><svg class="t"><use href="#tri-d"/></svg><span>Summary</span></div>
        <div class="ch ob"><svg class="t"><use href="#tri-d"/></svg><svg class="i"><use href="#obmesh"/></svg><span>Cube</span></div>
        <div class="ch act"><svg class="t"><use href="#tri-d"/></svg><svg class="i"><use href="#action"/></svg><span>CubeAction</span></div>
        <div class="ch grp"><svg class="t"><use href="#tri-d"/></svg><span>Object Transforms</span><svg class="wr"><use href="#wrench"/></svg><svg class="ck"><use href="#check"/></svg><svg class="lk"><use href="#lock"/></svg></div>
        <div class="ch fc"><span>X Location</span><svg class="wr"><use href="#wrench"/></svg><svg class="ck"><use href="#check"/></svg><svg class="lk"><use href="#lock"/></svg></div>
        <div class="ch fc"><span>Y Location</span><svg class="wr"><use href="#wrench"/></svg><svg class="ck"><use href="#check"/></svg><svg class="lk"><use href="#lock"/></svg></div>
        <div class="ch fc"><span>Z Location</span><svg class="wr"><use href="#wrench"/></svg><svg class="ck"><use href="#check"/></svg><svg class="lk"><use href="#lock"/></svg></div>
        <div class="ch fc"><span>X Euler Rotation</span><svg class="wr"><use href="#wrench"/></svg><svg class="ck"><use href="#check"/></svg><svg class="lk"><use href="#lock"/></svg></div>
        <div class="ch fc"><span>Y Euler Rotation</span><svg class="wr"><use href="#wrench"/></svg><svg class="ck"><use href="#check"/></svg><svg class="lk"><use href="#lock"/></svg></div>
        <div class="ch fc"><span>Z Euler Rotation</span><svg class="wr"><use href="#wrench"/></svg><svg class="ck"><use href="#check"/></svg><svg class="lk"><use href="#lock"/></svg></div>
        <div class="ch fc"><span>X Scale</span><svg class="wr"><use href="#wrench"/></svg><svg class="ck"><use href="#check"/></svg><svg class="lk"><use href="#lock"/></svg></div>
        <div class="ch fc"><span>Y Scale</span><svg class="wr"><use href="#wrench"/></svg><svg class="ck"><use href="#check"/></svg><svg class="lk"><use href="#lock"/></svg></div>
        <div class="ch fc"><span>Z Scale</span><svg class="wr"><use href="#wrench"/></svg><svg class="ck"><use href="#check"/></svg><svg class="lk"><use href="#lock"/></svg></div>
      </div>
      <svg class="canvas" width="463" height="434" viewBox="1085 603 463 434">
        <rect x="1085" y="603" width="463" height="434" fill="#434343"/>
        <rect x="1085" y="640" width="463" height="24" fill="#463224"/><rect x="1085" y="667" width="463" height="24" fill="#333d47"/><rect x="1085" y="694" width="463" height="24" fill="#3b3f47"/><rect x="1085" y="721" width="463" height="24" fill="#3e5a38"/>
        <g fill="#4a6442"><rect x="1085" y="748" width="463" height="24"/><rect x="1085" y="775" width="463" height="24"/><rect x="1085" y="802" width="463" height="24"/><rect x="1085" y="829" width="463" height="24"/><rect x="1085" y="856" width="463" height="24"/><rect x="1085" y="883" width="463" height="24"/><rect x="1085" y="910" width="463" height="24"/><rect x="1085" y="937" width="463" height="24"/><rect x="1085" y="964" width="463" height="24"/></g>
        <path fill="#000" fill-opacity=".18" d="M1085 638h61v107h-61zM1488.500 638H1548v107h-59.500z"/>
        <path fill="#0c2800" fill-opacity=".18" d="M1085 745h61v243h-61zM1488.500 745H1548v243h-59.500z"/>
        <path fill="#323232" d="M1085 988h61v49h-61zM1488.500 988H1548v49h-59.500z"/>
        <path d="M1109.500 638v399M1178.500 638v399M1247.500 638v399M1316.500 638v399M1385.500 638v399M1454.500 638v399M1523.500 638v399" stroke="#000" stroke-opacity=".14"/>
        <path d="M1212.500 638v399M1281.500 638v399M1350.500 638v399M1419.500 638v399" stroke="#000" stroke-opacity=".38"/>
        <path d="M1145.500 638v399M1488.500 638v399" stroke="#000" stroke-opacity=".9"/>
        <rect x="1085" y="603" width="463" height="35" fill="#2a2a2a"/>
        <path fill="#d9840f" d="M1224 753h119v15h-119zM1224 807h119v15h-119z"/>
        <g id="keys" fill="#ffbe32" stroke="#000" stroke-width="1.400"><circle cx="1151" cy="652.500" r="6.500"/><circle cx="1151" cy="679.500" r="6.500"/><circle cx="1151" cy="706.500" r="6.500"/><circle cx="1151" cy="733.500" r="6.500"/><circle cx="1151" cy="760.500" r="6.500"/><circle cx="1151" cy="787.500" r="6.500"/><circle cx="1151" cy="814.500" r="6.500"/><circle cx="1151" cy="841.500" r="6.500"/><circle cx="1151" cy="868.500" r="6.500"/><circle cx="1151" cy="895.500" r="6.500"/><circle cx="1151" cy="922.500" r="6.500"/><circle cx="1151" cy="949.500" r="6.500"/><circle cx="1151" cy="976.500" r="6.500"/></g>
        <use href="#keys" x="72.700"/><use href="#keys" x="191.700"/>
        <g class="tick-label"><text x="1212" y="627">50</text><text x="1281" y="627">100</text><text x="1350" y="627">150</text><text x="1418.500" y="627">200</text><text x="1487" y="627">250</text></g>
        <path d="M1151 632v405" stroke="#5680c2" stroke-width="2"/><rect x="1133" y="607.500" width="35.500" height="26" rx="5" fill="#5680c2"/><text class="now" x="1150.500" y="627">5</text>
        <g class="bar"><rect x="1098.500" y="1020" width="437" height="14" rx="7"/></g><g class="knob"><circle cx="1104.500" cy="1027" r="4.800"/><circle cx="1528.500" cy="1027" r="4.800"/></g>
        <g class="flap"><path d="M1548 625h-8a4 4 0 0 0-4 4v13a4 4 0 0 0 4 4h8z"/></g><path class="flap-arrow" d="m1545 630.500-5 5 5 5"/>
      </svg>
    </div>
  </section>

  <section class="area timeline-edge"></section>

  <aside class="side">
    <section class="area outliner">
      <div class="head">
        <div class="group"><span class="b dd"><svg class="i"><use href="#tree"/></svg><svg class="chev"><use href="#chev"/></svg></span></div>
        <div class="group g8"><span class="b dd"><svg class="i"><use href="#layers"/></svg><svg class="chev"><use href="#chev"/></svg></span></div>
        <div class="group g24"><span class="b flat find160"><svg class="i"><use href="#search"/></svg></span></div>
        <div class="group g24"><span class="b dd"><svg class="i"><use href="#filter"/></svg><svg class="chev"><use href="#chev"/></svg></span></div>
      </div>
      <div class="row first"><span class="chip"><svg class="i"><use href="#coll"/></svg></span><span class="name">Scene Collection</span></div>
      <div class="row alt r2"><svg class="t"><use href="#tri-d"/></svg><svg class="i"><use href="#coll"/></svg><span class="name">Collection</span><span class="toggles"><svg class="ck"><use href="#check"/></svg><svg class="i"><use href="#eye"/></svg><svg class="i"><use href="#cam"/></svg></span></div>
      <div class="row r3"><span class="guide"></span><svg class="t"><use href="#tri-r"/></svg><svg class="i tan"><use href="#movie"/></svg><span class="name">Camera</span><span class="chip teal cam-data"><svg class="i"><use href="#movie-o"/></svg></span><span class="toggles"><svg class="i"><use href="#eye"/></svg><svg class="i"><use href="#cam"/></svg></span></div>
      <div class="row alt r3"><span class="guide low"></span><svg class="t"><use href="#tri-r"/></svg><svg class="i tan"><use href="#bulb"/></svg><span class="name">Point</span><svg class="i d1"><use href="#anim"/></svg><svg class="i teal d2"><use href="#light"/></svg><span class="toggles"><svg class="i"><use href="#eye"/></svg><svg class="i"><use href="#cam"/></svg></span></div>
      <div class="row picked"><svg class="t"><use href="#tri-r"/></svg><span class="chip tan"><svg class="i"><use href="#obmesh"/></svg></span><span class="name">Cube</span><svg class="i c1"><use href="#anim"/></svg><svg class="i c2"><use href="#wrench-o"/></svg><svg class="i teal d2"><use href="#mesh"/></svg><span class="toggles"><svg class="i"><use href="#eye"/></svg><svg class="i"><use href="#cam"/></svg></span></div>
      <div class="row alt"></div><div class="row"></div><div class="row alt last"></div>
    </section>
    <section class="area properties">
      <div class="head">
        <div class="group"><span class="b dd"><svg class="i"><use href="#props"/></svg><svg class="chev"><use href="#chev"/></svg></span></div>
        <div class="group g39"><span class="b flat find160"><svg class="i"><use href="#search"/></svg></span></div>
        <div class="group g68"><span class="b sq solo"><svg class="chev"><use href="#chev"/></svg></span></div>
      </div>
      <div class="props-body">
        <div class="ptabs">
          <span class="pt sep"><svg class="i"><use href="#tool"/></svg></span><span class="pt"><svg class="i"><use href="#render"/></svg></span><span class="pt"><svg class="i"><use href="#output"/></svg></span><span class="pt"><svg class="i"><use href="#layers"/></svg></span><span class="pt cur"><svg class="i"><use href="#scene"/></svg></span><span class="pt sep rose"><svg class="i"><use href="#world"/></svg></span><span class="pt tan"><svg class="i"><use href="#object"/></svg></span><span class="pt sky"><svg class="i"><use href="#wrench"/></svg></span><span class="pt sky"><svg class="i"><use href="#parts"/></svg></span><span class="pt sky"><svg class="i"><use href="#physics"/></svg></span><span class="pt sky"><svg class="i"><use href="#constr"/></svg></span><span class="pt teal"><svg class="i"><use href="#mesh"/></svg></span><span class="pt sep rose"><svg class="i"><use href="#material"/></svg></span><span class="pt rose"><svg class="i"><use href="#texture"/></svg></span>
        </div>
        <div class="panels">
          <div class="crumb"><svg class="i"><use href="#scene"/></svg><span>Scene</span><svg class="i pin"><use href="#pin"/></svg></div>
          <div class="phead"><svg class="t"><use href="#tri-d"/></svg><span>Scene</span><svg class="grip"><use href="#grip"/></svg></div>
          <div class="pbody">
            <label>Camera</label><span class="field"><svg class="i"><use href="#object"/></svg>Camera<svg class="i clear"><use href="#x"/></svg></span>
            <label>Background ...</label><span class="field"><svg class="i"><use href="#scene"/></svg></span>
            <label>Active Clip</label><span class="field"><svg class="i"><use href="#clip"/></svg></span>
          </div>
          <div class="phead"><svg class="t"><use href="#tri-r"/></svg><span>Units</span><svg class="grip"><use href="#grip"/></svg></div>
          <div class="phead gravity"><svg class="t"><use href="#tri-r"/></svg><svg class="cb"><use href="#check"/></svg><span>Gravity</span><svg class="grip"><use href="#grip"/></svg></div>
          <div class="phead"><svg class="t"><use href="#tri-r"/></svg><span>Keying Sets</span><svg class="grip"><use href="#grip"/></svg></div>
          <div class="phead"><svg class="t"><use href="#tri-r"/></svg><span>Audio</span><svg class="grip"><use href="#grip"/></svg></div>
          <div class="phead"><svg class="t"><use href="#tri-r"/></svg><span>Rigid Body World</span><svg class="grip"><use href="#grip"/></svg></div>
          <div class="phead"><svg class="t"><use href="#tri-r"/></svg><span>Custom Properties</span><svg class="grip"><use href="#grip"/></svg></div>
        </div>
      </div>
    </section>
  </aside>
</main>
</body>
</html>
```
FILE: styles.css
```css
* { box-sizing: border-box; }
body { margin: 0; width: 1920px; height: 1046px; overflow: hidden; background: #1f1f1f; color: #1a1a1a; font: 17.500px/1 Roboto, sans-serif; letter-spacing: -.2px; white-space: nowrap; }
svg { display: block; flex: none; }
.defs { width: 0; height: 0; position: absolute; }
.i { width: 22px; height: 22px; }
.chev { width: 12px; height: 8px; }
.t { width: 12px; height: 12px; }
.tick { fill: none; stroke: var(--tick, #222); stroke-width: 2.200px; }

.titlebar { display: flex; align-items: center; height: 34px; background: #002b4b; color: #fff; padding-left: 3px; }
.app-logo { width: 23px; height: 19px; color: #ee8612; --ring: #fff; --eye: #25588f; }
.app-name { font: 16.500px "Open Sans", sans-serif; letter-spacing: -.3px; margin-left: 6px; }
.logo-ring { fill: var(--ring); } .logo-eye { fill: var(--eye); }
.window-buttons { display: flex; gap: 53px; margin: 0 29px 0 auto; }

.topbar { display: flex; height: 38px; background: #666; padding-left: 15px; }
.topbar > span { line-height: 38px; height: 38px; padding-top: 1px; }
.menu-logo { width: 23px; height: 20px; margin: 10px 14px 0 0; color: #1f1f1f; --ring: #666; --eye: #1f1f1f; }
.m-file { width: 48px; } .m-edit { width: 50px; } .m-render { width: 77px; } .m-window { width: 83px; } .m-help { width: 70px; }
.tabs { display: flex; padding-top: 7px; }
.tab { display: flex; align-items: center; justify-content: center; height: 31px; border: 1px solid #1b4a86; border-bottom: 0; border-radius: 6px 6px 0 0; background: linear-gradient(#1a1c4a, #02001f); color: #999; margin-right: 1px; padding-top: 2px; }
.tab.active { background: linear-gradient(#163a70, #2f5690); color: #fff; }
.t1 { width: 79px; } .t2 { width: 103px; } .t3 { width: 140px; } .t4 { width: 122px; } .t5 { width: 157px; } .t6 { width: 106px; } .t7 { width: 73px; } .t8 { width: 93px; } .t9 { width: 29px; }
.ids { display: flex; gap: 8px; margin-left: 23px; padding: 5px 0 0 11px; border-left: 2px solid #525252; height: 38px; }
.id-name { width: 181px; padding-left: 11px; }

.group { display: flex; height: 29px; border: 1px solid #3a3a3a; border-radius: 6px; overflow: hidden; flex: none; box-shadow: 0 1px 1px #0005; }
.b { display: flex; align-items: center; height: 27px; background: linear-gradient(#ececec, #b0b0b0); flex: none; color: #1a1a1a; }
.b + .b { border-left: 1px solid #3a3a3a; }
.b.flat { background: #cbcbcb; }
.b.on { background: #4f76b6; color: #fff; }
.b.off { background: #999; color: #7d7d7d; }
.b.off2 { background: #7b7b7b; color: #666; }
.off2 .chev { color: #444; }
.b.slate { background: #5a6f90; color: #b4c3da; }
.b.white { color: #fbfbfb; }
.b.soft { color: #3c3c3c; }
.sq { width: 29px; justify-content: center; }
.sq.solo { width: 27.500px; }
.pair .sq { width: 28.500px; }
.dd { width: 45px; padding-left: 5px; }
.dd.wide { width: 46px; }
.dd .chev { margin-left: 3px; margin-top: 2px; }
.select, .normalize, .id-name { padding-top: 2px; }
.select { padding-right: 3px; padding-left: 11px; }
.select .i, .normalize .i { margin-top: -2px; }
.select .chev { margin-left: auto; }
.w170 { width: 168px; }
.g8 { margin-left: 8px; } .g24 { margin-left: 24px; } .g39 { margin-left: 39px; } .g68 { margin-left: 68px; }

.workspace { display: grid; grid-template: 488px 472px 6px / 782px 762px 368px; gap: 3px; padding: 2px 0 0 1px; height: 974px; }
.area { border-radius: 8px; overflow: hidden; min-width: 0; }
.head { display: flex; align-items: center; height: 38px; background: linear-gradient(#626262, #575757); padding-left: 11px; overflow: hidden; }
.graph { background: #2a2a2a; }
.graph .head { padding-top: 1px; }
.burger { margin: 0 12.500px; }
.normalize { width: 133px; padding-left: 6px; color: #fbfbfb; gap: 13px; }
.mute { border-color: #555; }
.head .off.dim { background: #858585; color: #666; }

.tick-label text, .now { font: 17.500px Roboto, sans-serif; letter-spacing: -.2px; fill: #a3a3a3; text-anchor: middle; }
.now { fill: #fff; }
.y-label text { font: 17.700px Roboto, sans-serif; fill: #d6d6d6; text-anchor: middle; stroke: #0005; stroke-width: 1.500px; paint-order: stroke; }
.bar rect { fill: #686868; stroke: #505050; stroke-width: 1.500px; }
.knob circle { fill: #383838; }
.flap { fill: #222; } .flap.dark { fill: #1a1a1a; fill-opacity: .8; }
.flap-arrow { fill: none; stroke: #aaa; stroke-width: 1.500px; }
.floor path { vector-effect: non-scaling-stroke; stroke-width: 1.900px; }

.viewport { position: relative; }
.view-head { position: absolute; left: 11px; top: 456px; display: flex; }
.global { width: 117px; padding-left: 6px; gap: 10px; }

.menus { display: flex; margin-left: 18px; padding-top: 1px; }
.nla .menus { width: 371px; } .dope .menus { width: 348px; }
.w59 { width: 59px; } .w69 { width: 69px; } .w75 { width: 75px; } .w52 { width: 52px; } .w68 { width: 68px; } .w76 { width: 76px; } .w82 { width: 82px; }
.mode { width: 184px; padding-left: 5px; gap: 11px; }
.split { display: flex; height: 434px; background: #282828; }
.search-row { display: flex; height: 27px; margin: 4px 4px 6px 3px; border-radius: 5px; overflow: hidden; }
.find { flex: 1; padding-left: 5px; } .swap { width: 32px; justify-content: center; }

.nla-ch { width: 178px; }
.n-obj { display: flex; align-items: center; height: 36px; background: #5b87b6; border-radius: 6px 0 0 0; color: #b4b4b4; padding: 1px 6px 0 5px; margin-bottom: 1px; }
.n-obj .t { color: #fff; margin-right: 8px; }
.n-obj span { margin-left: 5px; padding-top: 1px; }
.n-obj .sel { color: #f3a62a; }
.n-obj .ck { width: 15px; height: 15px; margin-left: auto; color: #e6e6e6; --tick: #43688f; }
.n-act { display: flex; align-items: center; height: 35px; background: #cc711a; border-radius: 6px 0 0 0; margin: 0 0 6px 20px; color: #b8b8b8; padding-left: 1px; }
.n-act > .i { margin-top: 7px; }
.n-act span { margin-left: 5px; padding-top: 7px; }
.n-act .pushdown { display: flex; align-items: center; justify-content: center; width: 29px; height: 29px; margin: 0 1px 0 auto; background: #cbcbcb; border: 1px solid #222; border-radius: 6px; color: #1a1a1a; }
.pushdown svg { width: 21px; height: 23px; }

.dope-ch { width: 299px; color: #f0a52c; }
.ch { display: flex; align-items: center; height: 24px; margin-bottom: 3px; }
.ch span { padding-top: 2px; }
.ch .t { color: #fff; margin: 0 9px 0 5px; width: 13px; height: 11px; }
.summary { background: #4c2500; color: #b5b5b5; border-radius: 5px 0 0 5px; }
.ob { background: #102c4c; border-radius: 5px 0 0 5px; } .ob .i, .act .i { color: #b5b5b5; margin-right: 4px; }
.act { background: #163f68; margin-left: 9px; color: #b5b5b5; }
.ch.ob .t, .ch.act .t { margin-right: 7px; }
.grp { background: #17330f; margin-left: 20px; border-radius: 5px 0 0 5px; }
.fc { background: #333; margin-left: 30px; padding-left: 3px; }
.wr { width: 20px; height: 19px; color: #fff; margin-left: auto; }
.ch .ck { width: 15px; height: 15px; color: #ccc; margin: 0 8px 0 9px; }
.lk { width: 21px; height: 19px; color: #999; margin-right: 3px; }

.timeline-edge { grid-column: 1 / 3; grid-row: 3; background: #5c5c5c; border-radius: 6px 6px 0 0; height: 6px; }
.side { grid-column: 3; grid-row: 1 / 4; display: flex; flex-direction: column; gap: 3px; }
.outliner { height: 262px; background: #282828; color: #c3c3c3; }
.side .head { padding-left: 12px; }
.find160 { width: 159px; padding-left: 5px; }
.row { display: flex; align-items: center; height: 30px; position: relative; padding-left: 40px; }
.row.first { height: 31px; padding-left: 30px; } .row.alt { background: #313131; } .row.picked { background: #3b568c; }
.row.last { height: 13px; }
.row .t { color: #b5b5b5; width: 10px; height: 12px; }
.row > .i { margin: 0 11px 0 14px; }
.r3 { padding-left: 70px; }
.name { padding-top: 4px; }
.chip { display: flex; align-items: center; justify-content: center; width: 30px; height: 27px; border-radius: 7px; background: #505050; margin-right: 6px; }
.picked .chip { background: #62779f; margin: 0 7px 0 10px; }
.picked .name { color: #f3a62a; }
.row .tan { color: #cb8752; } .row .teal { color: #12b596; }
.guide { position: absolute; left: 43px; top: 7px; width: 1px; height: 23px; background: #777; } .guide.low { top: 0; }
.toggles { display: flex; align-items: center; margin-left: auto; padding: 0 16px 1px 0; color: #fff; }
.toggles .i + .i { margin-left: 7px; }
.toggles .ck { width: 15px; height: 15px; } .toggles .ck + .i { margin-left: 12px; }
.row .cam-data { position: absolute; left: 214px; }
.row > .d1, .row > .c1 { position: absolute; left: 199px; margin: 0; color: #999; } .row > .c1 { left: 169px; color: #a6aab2; }
.row > .c2 { position: absolute; left: 199px; margin: 0; color: #6f9cf0; } .row > .d2 { position: absolute; left: 229px; margin: 0; }

.properties { flex: 1; background: #424242; color: #dedede; border-radius: 8px 8px 0 0; }
.props-body { display: flex; height: 669px; }
.ptabs { width: 42px; background: #272727; padding: 12px 0 0 1px; }
.pt { display: flex; align-items: center; justify-content: center; width: 41px; height: 42px; border: 1px solid #234a85; border-right: 0; border-radius: 6px 0 0 6px; background: linear-gradient(#1b1d4c, #02001f); color: #bcbcc6; }
.pt.sep { margin-bottom: 12px; }
.pt.cur { background: linear-gradient(#173d74, #34598f); color: #fff; }
.pt.rose { color: #c4606e; } .pt.tan { color: #c98a56; } .pt.sky { color: #7099dc; } .pt.teal { color: #12b596; }
.panels { flex: 1; }
.crumb { display: flex; align-items: center; height: 54px; padding: 0 14px 0 16px; }
.crumb span { margin-left: 12px; padding-top: 1px; } .crumb .pin { margin-left: auto; color: #999; }
.phead { display: flex; align-items: center; height: 36px; padding: 1px 10px 0 13px; }
.phead .t { color: #a8a8a8; width: 11px; height: 11px; margin: 0 9px 2px 0; }
.phead .grip { width: 15px; height: 8px; margin-left: auto; margin-bottom: 4px; }
.gravity .cb { width: 20px; height: 20px; margin: 0 5px 0 -2px; color: #5079b9; --tick: #fff; }
.pbody { display: grid; grid-template-columns: 126px 173px; column-gap: 15px; row-gap: 9px; align-items: center; background: #383838; padding: 13px 0; height: 128px; }
.pbody label { text-align: right; padding-top: 1px; }
.field { display: flex; align-items: center; height: 28px; background: #cbcbcb; border-radius: 5px; color: #1a1a1a; padding: 0 5px 0 6px; gap: 10px; }
.clear { margin-left: auto; color: #555; }
```
